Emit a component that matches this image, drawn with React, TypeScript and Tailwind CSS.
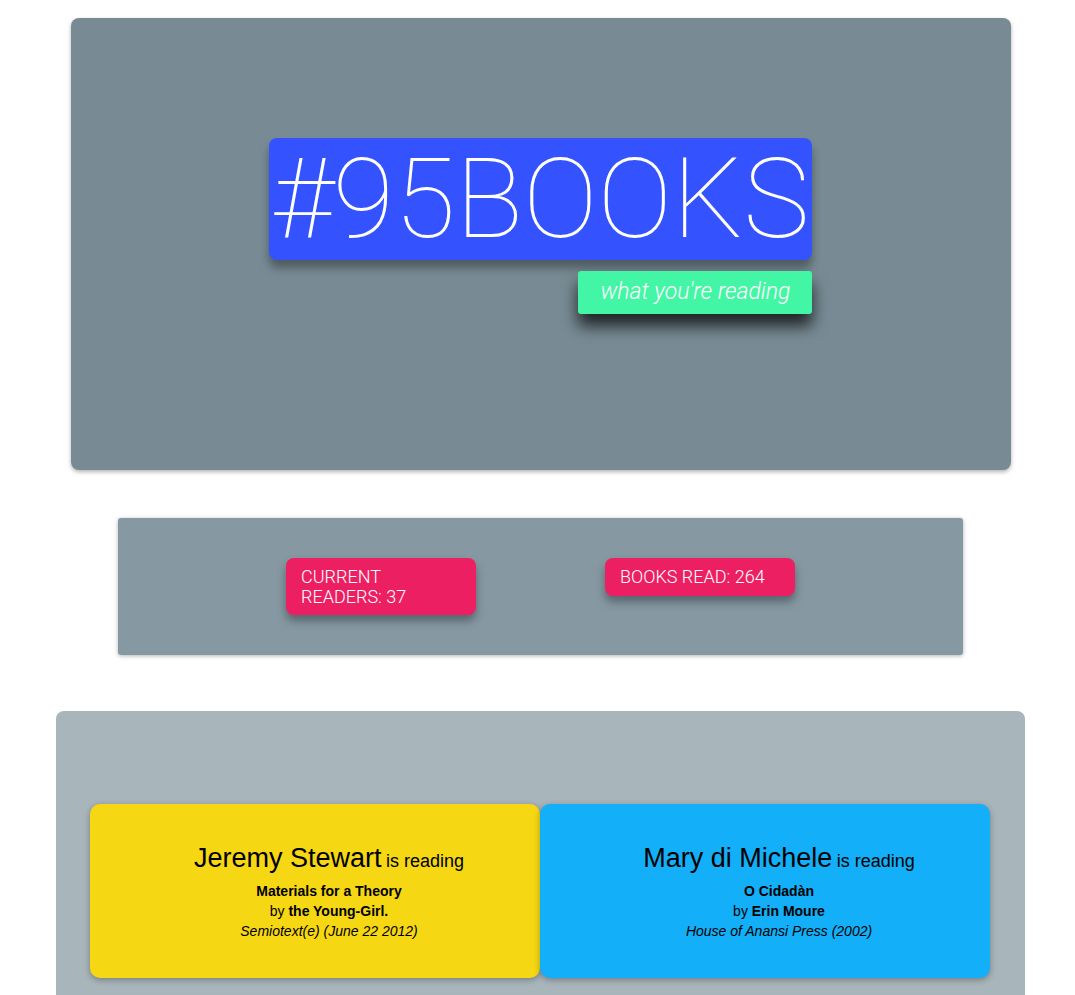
import React from "react";

const readers = [
    {
        name: "Jeremy Stewart",
        title: "Materials for a Theory",
        author: "the Young-Girl.",
        pub: "Semiotext(e) (June 22 2012)",
        color: "bg-[#f6d713]",
    },
    {
        name: "Mary di Michele",
        title: "O Cidadàn",
        author: "Erin Moure",
        pub: "House of Anansi Press (2002)",
        color: "bg-[#13aff8]",
    },
];

function ReaderCard({ r }: { r: (typeof readers)[number] }) {
    return (
        <div
            className={`${r.color} w-[450px] h-[174px] rounded-[10px] shadow-[0_2px_6px_rgba(0,0,0,0.3)] flex flex-col items-center justify-center pl-[28px] pt-[2px] text-black font-['Liberation_Sans',Arial,sans-serif]`}
        >
            <p className="leading-[30px] mb-[4px]">
                <span className="text-[27px]">{r.name}</span>{" "}
                <span className="text-[18px]">is reading</span>
            </p>
            <p className="text-[14px] leading-[20px] font-bold">{r.title}</p>
            <p className="text-[14px] leading-[20px]">
                by <span className="font-bold">{r.author}</span>
            </p>
            <p className="text-[14px] leading-[20px] italic">{r.pub}</p>
        </div>
    );
}

export default function App() {
    return (
        <div className="min-h-screen bg-white pl-[6px] pt-[18px] flex flex-col items-center font-['Roboto',sans-serif]">
            {/* Header */}
            <header className="w-[940px] h-[452px] bg-[#788b94] rounded-[8px] shadow-[0_2px_4px_rgba(0,0,0,0.3)] flex flex-col items-center pt-[120px]">
                <div className="flex flex-col items-end">
                    <h1 className="bg-[#3453ff] rounded-[8px] h-[122px] px-[3px] text-white font-thin text-[112px] leading-[122px] shadow-[0_8px_10px_rgba(0,0,0,0.35)]">
                        #95BOOKS
                    </h1>
                    <p className="mt-[11px] bg-[#43f6a5] rounded-[3px] w-[234px] h-[43px] flex items-center justify-center text-white italic font-light text-[23px] shadow-[0_12px_16px_rgba(0,0,0,0.75)]">
                        what you're reading
                    </p>
                </div>
            </header>

            {/* Stats */}
            <section className="mt-[48px] w-[845px] h-[137px] bg-[#8699a3] rounded-[3px] shadow-[0_1px_4px_rgba(0,0,0,0.3)] flex items-start pt-[40px] pl-[168px] gap-[129px]">
                <div className="w-[190px] bg-[#ec1f63] rounded-[8px] px-[15px] pt-[9px] pb-[8px] text-white font-light text-[18px] leading-[20px] uppercase shadow-[0_6px_10px_rgba(0,0,0,0.35)]">
                    Current Readers: 37
                </div>
                <div className="w-[190px] bg-[#ec1f63] rounded-[8px] px-[15px] pt-[9px] pb-[9px] text-white font-light text-[18px] leading-[20px] uppercase shadow-[0_6px_10px_rgba(0,0,0,0.35)]">
                    Books Read: 264
                </div>
            </section>

            {/* Readers */}
            <section className="mt-[56px] w-[969px] bg-[#a8b5bb] rounded-t-[8px] pt-[93px] pb-[60px] px-[34px] flex">
                {readers.map((r) => (
                    <ReaderCard key={r.name} r={r} />
                ))}
            </section>
        </div>
    );
}
